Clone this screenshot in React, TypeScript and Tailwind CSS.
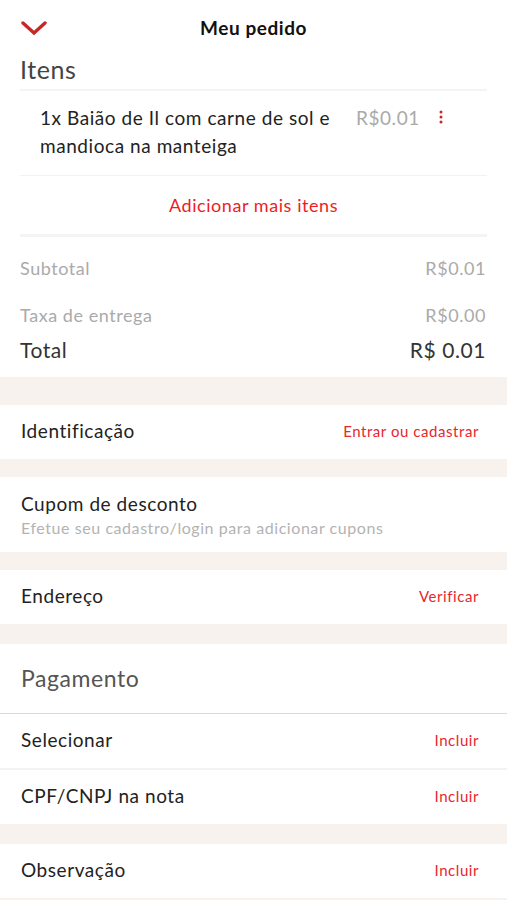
import React from "react";

const font = { fontFamily: "Lato, 'Noto Sans', sans-serif", letterSpacing: "0.035em" };

function Row({ label, action }: { label: string; action?: string }) {
    return (
        <div className="flex items-center justify-between bg-white pl-[21px] pr-[28px] h-[54px] pb-[1px]">
            <span className="text-[19px] text-[#222]">{label}</span>
            {action && <span className="text-[15px] text-[#e8262d]">{action}</span>}
        </div>
    );
}

export default function App() {
    return (
        <div style={font} className="w-[507px] h-[900px] bg-[#f7f2ee] overflow-hidden">
            <div className="bg-white">
                <div className="relative flex items-center justify-center h-[56px]">
                    <svg className="absolute left-[21px] top-[20px]" width="26" height="16" viewBox="0 0 26 16">
                        <path d="M2 3 L13 13 L24 3" fill="none" stroke="#c62828" strokeWidth="3.4" strokeLinecap="round" />
                    </svg>
                    <span className="text-[19px] font-bold text-[#111]">Meu pedido</span>
                </div>
                <div className="px-[20px]">
                    <div className="text-[25px] text-[#444] leading-[28px] pb-[6px] -mt-[1px]">Itens</div>
                    <div className="h-[2px] bg-[#f4f4f4]" />
                    <div className="flex items-start pl-[20px] pt-[13px] h-[84px]">
                        <div className="w-[300px] text-[19px] leading-[28px] text-[#222]">
                            1x Baião de Il com carne de sol e mandioca na manteiga
                        </div>
                        <div className="ml-[16px] text-[19px] leading-[28px] text-[#aaa]">R$0.01</div>
                        <svg className="ml-[19px] mt-[6px]" width="4" height="14" viewBox="0 0 4 14">
                            <circle cx="2" cy="2" r="1.5" fill="#c62828" />
                            <circle cx="2" cy="7" r="1.5" fill="#c62828" />
                            <circle cx="2" cy="12" r="1.5" fill="#c62828" />
                        </svg>
                    </div>
                    <div className="h-[1px] bg-[#f2f2f2]" />
                    <div className="flex items-center justify-center h-[58px] text-[18px] text-[#ee1c25]">
                        Adicionar mais itens
                    </div>
                    <div className="h-[3px] bg-[#f4f4f4]" />
                    <div className="flex flex-col pt-[19px] pb-[14px] pr-[1px]">
                        <div className="flex justify-between text-[18px] text-[#aaa] leading-[24px]">
                            <span>Subtotal</span>
                            <span>R$0.01</span>
                        </div>
                        <div className="flex justify-between text-[18px] text-[#aaa] leading-[24px] mt-[23px]">
                            <span>Taxa de entrega</span>
                            <span>R$0.00</span>
                        </div>
                        <div className="flex justify-between text-[21px] text-[#333] leading-[26px] mt-[10px]">
                            <span>Total</span>
                            <span>R$ 0.01</span>
                        </div>
                    </div>
                </div>
            </div>
            <div className="h-[28px]" />
            <Row label="Identificação" action="Entrar ou cadastrar" />
            <div className="h-[18px]" />
            <div className="flex flex-col justify-center bg-white pl-[21px] h-[75px]">
                <span className="text-[19px] text-[#222] leading-[26px]">Cupom de desconto</span>
                <span className="text-[16px] text-[#b3b3b3] leading-[22px]">Efetue seu cadastro/login para adicionar cupons</span>
            </div>
            <div className="h-[18px]" />
            <Row label="Endereço" action="Verificar" />
            <div className="h-[20px]" />
            <div className="flex items-center bg-white pl-[21px] h-[69px] pb-[1px]">
                <span className="text-[23px] text-[#555]">Pagamento</span>
            </div>
            <div className="h-[1px] bg-[#d9d9d9]" />
            <Row label="Selecionar" action="Incluir" />
            <div className="h-[2px] bg-[#f3f3f3]" />
            <Row label="CPF/CNPJ na nota" action="Incluir" />
            <div className="h-[20px]" />
            <Row label="Observação" action="Incluir" />
        </div>
    );
}
